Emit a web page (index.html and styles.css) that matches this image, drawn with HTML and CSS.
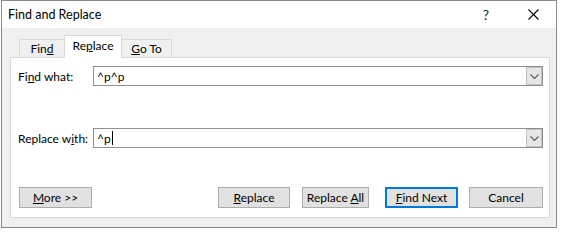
FILE: index.html
```html
<!DOCTYPE html>
<html>
<head>
<meta charset="utf-8">
<title>Find and Replace</title>
<link rel="stylesheet" href="styles.css">
</head>
<body>
<div class="dialog">
  <div class="titlebar">
    <span class="title">Find and Replace</span>
    <span class="cap-btn help">?</span>
    <span class="cap-btn close">
      <svg width="11" height="11" viewBox="0 0 11 11"><path d="M0.5 0.5 L10.5 10.5 M10.5 0.5 L0.5 10.5" stroke="#000" stroke-width="1.1" fill="none"/></svg>
    </span>
  </div>
  <div class="tabs">
    <div class="tab tab-find"><span>Fin<u>d</u></span></div>
    <div class="tab tab-replace active"><span>Re<u>p</u>lace</span></div>
    <div class="tab tab-goto"><span><u>G</u>o To</span></div>
  </div>
  <div class="panel">
    <div class="row row-find">
      <span class="label">Fi<u>n</u>d what:</span>
      <div class="combo">
        <span class="value">^p^p</span>
        <span class="drop"><svg width="9" height="5" viewBox="0 0 9 5"><path d="M0.5 0.5 L4.5 4.5 L8.5 0.5" stroke="#5a5a5a" stroke-width="1.1" fill="none"/></svg></span>
      </div>
    </div>
    <div class="row row-replace">
      <span class="label">Replace w<u>i</u>th:</span>
      <div class="combo">
        <span class="value"><span>^p</span><span class="caret"></span></span>
        <span class="drop"><svg width="9" height="5" viewBox="0 0 9 5"><path d="M0.5 0.5 L4.5 4.5 L8.5 0.5" stroke="#5a5a5a" stroke-width="1.1" fill="none"/></svg></span>
      </div>
    </div>
    <div class="buttons">
      <div class="btn btn-more"><span><u>M</u>ore &gt;&gt;</span></div>
      <div class="spacer"></div>
      <div class="btn btn-replace"><span><u>R</u>eplace</span></div>
      <div class="btn btn-replace-all"><span>Replace <u>A</u>ll</span></div>
      <div class="btn btn-find-next default"><span><u>F</u>ind Next</span></div>
      <div class="btn btn-cancel"><span>Cancel</span></div>
    </div>
  </div>
</div>
</body>
</html>
```
FILE: styles.css
```css
* { box-sizing: border-box; }
html, body { margin: 0; padding: 0; background: #ffffff; }
body {
  font-family: "Lato", "Noto Sans", "DejaVu Sans", sans-serif;
  font-size: 12px;
  color: #000;
}
u { text-decoration: underline; text-underline-offset: 1px; text-decoration-thickness: 1px; }

.dialog {
  margin-left: 1px;
  width: 556px;
  height: 228px;
  border: 1px solid #8a8a8a;
  background: #f0f0f0;
  display: flex;
  flex-direction: column;
}

.titlebar {
  height: 27px;
  background: #ffffff;
  display: flex;
  align-items: center;
  flex: none;
}
.title {
  padding-left: 6px;
  font-size: 12.5px;
  flex: 1;
}
.cap-btn {
  width: 46px;
  height: 27px;
  display: flex;
  align-items: center;
  justify-content: center;
}
.help { font-size: 14px; padding-right: 2px; color: #222; }
.close svg { display: block; }

.tabs {
  height: 29px;
  display: flex;
  align-items: flex-end;
  padding-left: 17px;
  flex: none;
}
.tab {
  height: 18px;
  border: 1px solid #d9d9d9;
  border-bottom: none;
  background: #f0f0f0;
  display: flex;
  align-items: center;
  justify-content: center;
}
.tab-find { width: 45px; border-right: none; }
.tab-goto { width: 50px; border-left: none; }
.tab.active {
  width: 58px;
  height: 23px;
  margin-bottom: -1px;
  background: #ffffff;
  position: relative;
  z-index: 1;
  padding-bottom: 4px;
}

.panel {
  margin-left: 8px;
  width: 540px;
  height: 161px;
  border: 1px solid #d9d9d9;
  background: #ffffff;
  padding: 8px 6px 0 7px;
  display: flex;
  flex-direction: column;
  flex: none;
}

.row {
  display: flex;
  align-items: center;
  height: 20px;
}
.row-replace { margin-top: 42px; }
.label { width: 75px; flex: none; }
.combo {
  flex: 1;
  height: 20px;
  border: 1px solid #8f8f8f;
  background: #fff;
  display: flex;
  align-items: center;
  padding: 0 0 0 3px;
}
.value { flex: 1; display: flex; align-items: center; }
.caret {
  display: inline-block;
  width: 1px;
  height: 14px;
  background: #000;
  margin-left: 1px;
}
.drop {
  width: 16px;
  height: 18px;
  background: #e6e6e6;
  border: 1px solid #c2c2c2;
  display: flex;
  align-items: center;
  justify-content: center;
}
.drop svg { display: block; }

.buttons {
  margin-top: 39px;
  display: flex;
  align-items: center;
  height: 21px;
}
.spacer { flex: 1; }
.btn {
  height: 21px;
  background: #e1e1e1;
  border: 1px solid #adadad;
  display: flex;
  align-items: center;
  justify-content: center;
  flex: none;
}
.btn-more { width: 73px; margin-left: 1px; }
.btn-replace { width: 72px; }
.btn-replace-all { width: 67px; margin-left: 12px; }
.btn-find-next { width: 73px; margin-left: 16px; }
.btn-cancel { width: 74px; margin-left: 11px; }
.btn.default { border: 2px solid #0078d7; }
```
